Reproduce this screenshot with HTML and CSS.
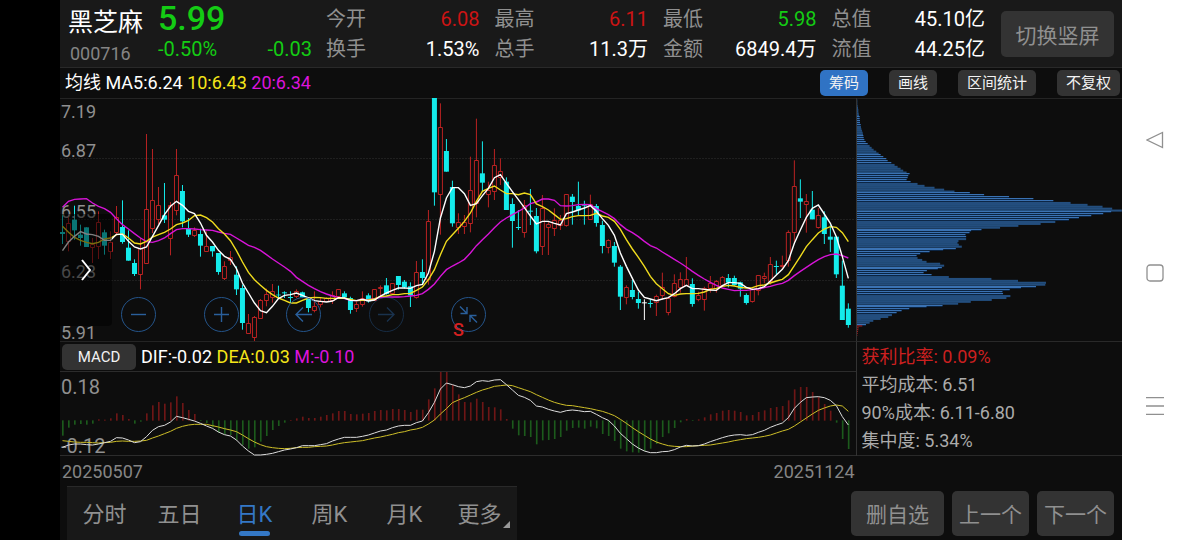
FILE: index.html
```html
<!DOCTYPE html>
<html lang="zh-CN">

<head>
	<meta charset="utf-8">
	<title>黑芝麻 000716</title>
	<link rel="stylesheet" href="styles.css">
</head>

<body>
	<main class="app">
		<header class="quote">
			<div class="stock">
				<h1>黑芝麻</h1>
				<span class="code">000716</span>
			</div>
			<div class="price">
				<strong>5.99</strong>
				<div class="change"><span>-0.50%</span><span>-0.03</span></div>
			</div>
			<dl class="fields">
				<div><dt>今开</dt><dd class="up">6.08</dd></div>
				<div><dt>最高</dt><dd class="up">6.11</dd></div>
				<div><dt>最低</dt><dd class="down">5.98</dd></div>
				<div><dt>总值</dt><dd>45.10亿</dd></div>
				<div><dt>换手</dt><dd>1.53%</dd></div>
				<div><dt>总手</dt><dd>11.3万</dd></div>
				<div><dt>金额</dt><dd>6849.4万</dd></div>
				<div><dt>流值</dt><dd>44.25亿</dd></div>
			</dl>
			<button class="btn rotate">切换竖屏</button>
		</header>

		<div class="toolbar">
			<p class="legend">均线 MA5:6.24 <span class="yellow">10:6.43</span> <span class="magenta">20:6.34</span></p>
			<button class="btn small active">筹码</button>
			<button class="btn small">画线</button>
			<button class="btn small">区间统计</button>
			<button class="btn small">不复权</button>
		</div>

		<div class="charts">
			<section class="left">
				<div class="kline">
					<svg id="kline" viewBox="0 0 2387 729" preserveAspectRatio="none"></svg>
					<div class="scale">
						<div><span>7.19</span><span>6.87</span></div>
						<div><span>6.55</span></div>
						<div><span>6.23</span></div>
						<div><span>5.91</span></div>
					</div>
					<button class="drawer" aria-label="展开">
						<svg width="10" height="22" viewBox="0 0 10 22"><path d="M1 1L9 11L1 21" /></svg>
					</button>
					<div class="controls">
						<button aria-label="缩小"><svg viewBox="0 0 35 35"><path d="M10 17.5H25" /></svg></button>
						<button aria-label="放大"><svg viewBox="0 0 35 35"><path d="M10 17.5H25M17.5 10V25" /></svg></button>
						<button aria-label="左移"><svg viewBox="0 0 35 35"><path d="M26 17.5H10M17 10.5L10 17.5L17 24.5" /></svg></button>
						<button aria-label="右移" disabled><svg viewBox="0 0 35 35"><path d="M9 17.5H25M18 10.5L25 17.5L18 24.5" /></svg></button>
						<button aria-label="收起"><svg viewBox="0 0 35 35"><path d="M9 9.5L16 16.5M9.5 16.5H16V10M26 25.5L19 18.5M25.5 18.5H19V25" /></svg></button>
					</div>
					<span class="mark">S</span>
				</div>
				<div class="indicator">
					<button class="btn small">MACD</button>
					<p class="legend">DIF:-0.02 <span class="yellow">DEA:0.03</span> <span class="magenta">M:-0.10</span></p>
				</div>
				<div class="macd">
					<svg id="macd" viewBox="0 0 2387 252" preserveAspectRatio="none"></svg>
					<span>0.18</span>
					<span>-0.12</span>
				</div>
				<div class="dates"><span>20250507</span><span>20251124</span></div>
			</section>
			<aside class="right">
				<svg id="chips" viewBox="0 0 798 729" preserveAspectRatio="none"></svg>
				<ul class="cost">
					<li class="profit">获利比率: 0.09%</li>
					<li>平均成本: 6.51</li>
					<li>90%成本: 6.11-6.80</li>
					<li>集中度: 5.34%</li>
				</ul>
			</aside>
		</div>

		<footer>
			<nav class="tabs">
				<a href="#">分时</a>
				<a href="#">五日</a>
				<a href="#" class="current">日K</a>
				<a href="#">周K</a>
				<a href="#">月K</a>
				<a href="#" class="more">更多</a>
			</nav>
			<div class="actions">
				<button class="btn">删自选</button>
				<button class="btn">上一个</button>
				<button class="btn">下一个</button>
			</div>
		</footer>
	</main>

	<div class="system">
		<svg width="18" height="18" viewBox="0 0 18 18"><path d="M16.5 1.5V16.5L1 9Z" /></svg>
		<svg width="18" height="18" viewBox="0 0 18 18"><rect x="1" y="1" width="16" height="16" rx="3" /></svg>
		<svg width="18" height="18" viewBox="0 0 18 18"><path d="M0 .5H18M0 9H18M0 17.5H18" /></svg>
	</div>

	<script src="chart.js"></script>
</body>

</html>
```
FILE: styles.css
```css
* {
	box-sizing: border-box;
}

body {
	display: flex;
	min-height: 100vh;
	margin: 0;
	padding-left: 60px;
	background: #000;
	color: #fff;
	font-family: Roboto, "Noto Sans CJK SC", sans-serif;
	font-size: 18px;
	line-height: 20px;
}

h1,
p,
dl,
dd,
ul {
	margin: 0;
	padding: 0;
}

button {
	border: none;
	padding: 0;
	background: none;
	font-family: inherit;
}

svg {
	display: block;
	fill: none;
}

.app {
	flex: 1;
	display: flex;
	flex-direction: column;
	min-width: 0;
	background: #0d0d0d;
}

.btn {
	border-radius: 5px;
	background: #333;
	color: #909090;
	font-size: 21px;
	white-space: nowrap;
}

.btn.small {
	height: 26px;
	padding: 0 9px;
	color: #f2f2f2;
	font-size: 15px;
	line-height: 24px;
}

.btn.small.active {
	background: #3073c4;
}

.up {
	color: #cc1414;
}

.down {
	color: #14cc14;
}

.yellow {
	color: #f5e619;
}

.magenta {
	color: #dc14dc;
}

/* quote header */
.quote {
	display: flex;
	height: 68px;
	padding: 0 8px;
	border-bottom: 1px solid #292929;
	background: #191919;
}

.stock {
	width: 90px;
	padding-top: 8px;
}

.stock h1 {
	font-size: 25px;
	font-weight: 400;
	line-height: 30px;
}

.code {
	display: block;
	padding: 6px 2px;
	color: #858585;
}

.price {
	width: 154px;
	color: #14cc14;
	font-size: 20px;
}

.price strong {
	display: block;
	font-size: 34px;
	font-weight: 500;
	line-height: 36px;
}

.change {
	display: flex;
	justify-content: space-between;
	line-height: 26px;
}

.fields {
	flex: 1;
	display: grid;
	grid-template-columns: repeat(4, 1fr);
	column-gap: 15px;
	align-content: start;
	padding: 4px 16px 0 14px;
	font-size: 20px;
	line-height: 30px;
}

.fields div {
	display: flex;
	justify-content: space-between;
}

.fields dt {
	color: #909090;
}

.rotate {
	align-self: center;
	width: 113px;
	height: 46px;
}

/* moving averages */
.toolbar {
	display: flex;
	align-items: center;
	gap: 21px;
	height: 30px;
	padding: 0 2px 0 5px;
}

.toolbar .legend {
	flex: 1;
}

/* charts */
.charts {
	display: grid;
	grid-template-columns: 3fr 1fr;
	flex: 1;
}

.left,
.right {
	min-width: 0;
}

.kline,
.macd {
	position: relative;
	border-right: 1px solid #333;
}

.kline svg#kline,
#chips {
	width: 100%;
	height: 243px;
	box-shadow: inset 0 1px #242424;
}

.scale {
	position: absolute;
	inset: 1px 0 -1px;
	display: grid;
	grid-template-rows: repeat(4, 1fr);
	padding-left: 1px;
	color: #909090;
	line-height: 18px;
}

.scale div {
	display: flex;
	flex-direction: column;
	justify-content: flex-end;
}

.scale div:first-child {
	justify-content: space-between;
	padding-top: 4px;
}

.drawer {
	position: absolute;
	left: 0;
	bottom: 15px;
	display: flex;
	align-items: center;
	justify-content: center;
	width: 52px;
	height: 112px;
	border-radius: 0 4px 4px 0;
	background: rgba(0, 0, 0, .5);
}

.drawer svg {
	stroke: #fff;
	stroke-width: 2;
}

.controls {
	position: absolute;
	left: 61px;
	bottom: 9px;
	display: flex;
	justify-content: space-between;
	width: 365px;
}

.controls button {
	width: 35px;
	height: 35px;
	border: 1px solid #24548a;
	border-radius: 50%;
}

.controls button:disabled {
	opacity: .45;
}

.controls svg {
	margin: -1px;
	stroke: #2a5f9b;
	stroke-width: 1.4;
}

.mark {
	position: absolute;
	left: 393px;
	bottom: 1px;
	color: #d42020;
	font-size: 18px;
	font-weight: 500;
}

.indicator {
	display: flex;
	align-items: center;
	gap: 5px;
	height: 30px;
	padding-left: 2px;
	border-top: 1px solid #242424;
	border-right: 1px solid #333;
}

.indicator .btn {
	width: 74px;
}

.macd {
	display: flex;
	flex-direction: column;
	justify-content: space-between;
	height: 85px;
	padding: 6px 0 0 1px;
	box-shadow: inset 0 1px #2c2c2c, inset 0 -1px #2c2c2c;
	color: #909090;
	font-size: 20px;
}

.macd svg {
	position: absolute;
	left: 0;
	bottom: 0;
	width: 100%;
	height: 84px;
}

.dates {
	display: flex;
	justify-content: space-between;
	padding: 6px 2px 4px;
	color: #858585;
}

.cost {
	display: flex;
	flex-direction: column;
	justify-content: space-around;
	height: 115px;
	padding: 1px 0 0 5px;
	border-top: 1px solid #292929;
	border-bottom: 1px solid #292929;
	color: #ababab;
	list-style: none;
}

.cost .profit {
	color: #cc2020;
}

/* chart shapes */
#kline path,
#macd path {
	vector-effect: non-scaling-stroke;
}

.grid {
	stroke: #1f1f1f;
	stroke-dasharray: 2 1;
}

.rise {
	stroke: #b92222;
}

.fall {
	fill: #14ebeb;
	stroke: none;
}

.flat {
	fill: #fff;
}

.ma5 {
	stroke: #fff;
	stroke-width: 1.4;
}

.ma10 {
	stroke: #f0dc1e;
	stroke-width: 1.4;
}

.ma20 {
	stroke: #d714d7;
	stroke-width: 1.4;
}

.dif {
	stroke: #ddd;
}

.dea {
	stroke: #cdbe28;
}

.bar-up {
	fill: #6e1616;
}

.bar-down {
	fill: #1c5a1c;
}

.chip {
	fill: #234e7e;
}

.chip-gap {
	fill: #0b2442;
}

.chip-line {
	fill: #3a72b3;
}

.chip-win {
	fill: #b52020;
}

/* period tabs */
footer {
	display: flex;
	justify-content: space-between;
	height: 54px;
	padding: 0 8px 0 7px;
}

.tabs {
	display: grid;
	grid-template-columns: repeat(6, 75px);
	border-top: 1px solid #292929;
	background: #181818;
}

.tabs a {
	position: relative;
	color: #909090;
	font-size: 22px;
	line-height: 56px;
	text-align: center;
	text-decoration: none;
}

.tabs .current {
	color: #3478c6;
}

.tabs .current::after {
	content: "";
	position: absolute;
	left: 22px;
	top: 44px;
	width: 31px;
	height: 5px;
	border-radius: 3px;
	background: #3478c6;
}

.more::after {
	content: "";
	position: absolute;
	right: 7px;
	top: 34px;
	border-left: 7px solid transparent;
	border-bottom: 7px solid #999;
}

.actions {
	display: flex;
	gap: 8px;
	padding: 5px 0 4px;
}

.actions .btn {
	padding: 0 7px 2px;
}

.actions .btn:first-child {
	padding: 0 15px 2px;
}

/* phone navigation strip */
.system {
	display: flex;
	flex-direction: column;
	align-items: center;
	justify-content: center;
	gap: 115px;
	width: 66px;
	padding-top: 5px;
	background: #fff;
}

.system svg {
	stroke: #909090;
	stroke-width: 1.3;
}
```
FILE: chart.js
```js
// high, body top, body bottom, low, direction (1 rise, 0 fall, 2 flat)
const candles = [
	[350,402,408,438,0],[350,375,430,460,1],[323,365,397,425,0],[380,410,420,443,0],[388,388,447,447,0],
	[420,438,448,495,1],[340,374,444,483,1],[395,403,443,470,0],[400,432,461,483,1],[324,357,403,408,1],
	[307,387,432,437,0],[397,449,488,488,0],[484,495,528,534,0],[420,452,529,574,1],[108,334,497,497,1],
	[153,307,391,405,1],[267,322,364,378,1],[255,352,365,375,0],[312,322,421,472,1],[153,232,338,352,1],
	[261,279,370,388,0],[360,393,410,417,0],[388,397,412,417,1],[392,408,443,476,0],[400,444,461,461,1],
	[444,444,460,476,0],[465,465,522,530,0],[490,505,542,546,1],[459,479,487,501,1],[505,530,574,591,0],
	[560,570,675,695,0],[648,676,705,707,1],[654,659,717,729,1],[603,607,661,661,1],[572,589,608,625,1],
	[558,580,598,614,1],[563,590,592,600,0],[580,583,586,600,0],[580,597,600,616,0],[574,580,596,600,1],
	[581,583,598,600,0],[598,602,630,643,0],[580,626,638,643,1],[600,611,620,628,1],[598,602,610,612,1],
	[580,592,606,618,1],[574,574,594,600,1],[580,586,598,600,0],[596,600,636,647,0],[612,618,632,642,1],
	[580,601,618,626,1],[586,592,610,614,0],[574,574,606,606,1],[562,569,572,594,1],[540,562,588,590,0],
	[556,557,586,590,1],[534,534,561,575,0],[546,551,568,572,0],[553,565,592,627,0],[489,523,598,602,1],
	[484,522,540,560,0],[336,369,545,560,1],[0,0,283,323,0],[16,89,290,410,1],[123,159,221,221,0],
	[248,267,376,386,0],[346,373,388,408,1],[351,372,384,408,1],[176,277,377,403,1],[62,187,316,358,1],
	[130,226,254,279,0],[251,278,290,328,1],[153,203,279,306,1],[181,221,238,261,1],[238,251,336,336,0],
	[301,318,369,449,0],[336,387,390,396,0],[306,321,404,419,1],[273,338,341,381,0],[330,354,460,466,0],
	[291,330,445,471,1],[369,380,388,471,1],[331,366,391,414,1],[351,368,381,396,1],[289,290,382,386,1],
	[288,296,312,380,0],[251,324,337,353,0],[308,322,324,380,0],[290,319,364,366,1],[318,324,375,386,0],
	[368,381,444,466,0],[424,426,449,466,1],[432,444,494,506,0],[501,506,596,636,0],[562,568,598,619,1],
	[546,576,597,604,0],[581,603,615,632,0],[604,613,616,666,2],[604,615,618,629,0],[590,595,613,654,1],
	[524,569,593,606,1],[596,600,644,652,1],[529,556,594,598,1],[523,544,569,584,1],[477,544,562,564,1],
	[541,558,618,626,0],[581,592,605,610,1],[566,570,605,638,1],[534,556,571,584,1],[546,551,571,584,1],
	[534,538,561,566,1],[528,540,554,568,0],[533,540,561,563,0],[551,553,572,596,0],[586,591,615,620,0],
	[568,574,610,614,1],[531,532,576,592,1],[524,534,541,556,1],[477,500,551,560,1],[488,504,507,529,0],
	[473,502,505,514,1],[397,403,488,506,1],[187,266,403,436,1],[244,301,311,360,0],[288,310,318,404,1],
	[279,335,364,364,0],[330,352,388,392,1],[340,358,408,438,0],[380,416,425,462,0],[416,416,529,540,0],
	[488,563,666,666,0],[616,632,681,689,0]
];

const ma5 = [458,432,415,401,408,410,415,427,427,409,409,430,447,453,447,415,383,350,325,310,322,340,347,375,412,432,457,475,484,512,555,585,615,638,644,625,602,592,590,585,592,600,608,610,612,609,599,600,607,608,604,609,606,594,585,577,570,570,571,563,559,525,460,360,300,269,269,287,322,317,293,271,239,230,256,281,305,329,354,378,370,370,376,381,347,342,336,330,323,340,362,382,412,465,505,541,576,598,603,608,603,599,587,572,562,572,572,574,576,577,563,554,554,556,568,574,572,566,549,531,514,488,436,396,358,331,321,348,376,416,476,541];
const ma10 = [385,403,418,427,433,437,433,423,420,410,408,420,435,438,430,417,410,403,393,380,375,367,353,351,359,372,392,408,428,458,492,523,545,562,577,590,600,607,615,615,607,600,598,599,601,601,601,600,604,608,607,606,603,595,594,590,590,587,586,577,567,545,515,470,430,410,391,370,345,310,280,271,264,276,287,287,290,285,290,318,326,336,350,364,362,356,353,353,352,346,354,358,370,394,425,453,478,505,535,557,572,587,592,588,587,587,586,582,574,571,565,562,564,568,570,569,563,561,555,549,544,530,503,475,446,425,405,393,386,388,404,431];
const ma20 = [328,310,304,303,302,315,325,332,343,362,380,393,407,420,431,433,428,420,407,395,392,392,393,395,396,397,402,406,409,420,431,442,448,457,470,483,495,507,520,538,550,562,572,581,588,594,598,602,607,608,606,605,602,599,597,597,597,596,594,592,587,574,558,535,515,504,495,484,465,443,425,408,389,372,360,350,340,330,317,312,303,303,307,323,324,323,320,319,320,332,341,350,362,380,394,404,416,430,443,450,462,473,484,495,507,520,532,543,553,562,570,574,578,577,577,575,573,569,565,560,556,547,533,520,508,496,485,476,470,468,473,480];

const macdBars = [287,263,254,252,254,251,238,239,235,220,225,237,251,245,220,196,186,191,187,169,189,210,222,243,249,262,278,283,285,300,315,326,322,305,288,270,258,248,240,235,230,234,234,230,225,220,213,213,222,223,221,219,213,210,211,207,207,210,216,209,209,178,145,95,95,135,163,186,187,176,186,201,202,208,237,266,286,288,291,313,301,300,297,291,272,264,263,266,260,265,282,288,303,326,334,337,338,333,326,312,291,280,264,247,237,243,238,232,223,219,212,210,212,216,226,225,216,211,204,201,198,181,148,141,141,156,171,192,212,248,297,327];
const dif = [322,315,312,312,314,315,312,308,304,293,294,300,308,305,290,271,260,256,246,229,233,238,243,250,258,265,276,284,288,300,318,333,345,345,343,340,335,330,327,323,317,317,317,314,311,303,297,292,292,292,289,285,279,273,270,263,258,256,256,248,243,218,187,147,129,134,140,143,138,125,122,124,120,119,134,150,166,172,181,198,201,208,213,217,212,210,212,215,214,223,233,241,258,280,296,312,324,333,338,338,335,334,329,321,316,318,317,312,305,299,293,288,285,284,286,284,277,271,262,255,249,233,205,187,173,171,170,173,181,197,230,255];
const dea = [302,304,306,307,307,308,309,308,307,304,303,304,304,303,301,294,288,281,274,265,259,255,253,253,253,257,261,266,270,275,285,296,306,314,320,323,325,326,325,323,322,322,320,319,318,315,311,308,306,304,302,298,294,291,287,283,278,275,270,267,262,252,240,222,206,188,180,173,165,157,150,145,139,137,135,137,143,149,155,164,172,180,187,192,196,197,200,203,206,210,214,220,227,238,250,263,275,286,297,306,312,317,319,320,320,318,317,316,315,312,309,306,302,299,296,294,292,289,285,279,273,268,258,246,234,222,211,204,198,195,198,214];

// holdings per price level, top to bottom
const chips = [
	1,1,1,2,3,4,4,5,6,
	8,8,9,9,11,12,13,15,17,18,
	19,20,22,26,32,38,44,50,58,65,
	71,79,88,92,103,113,122,131,139,149,
	158,154,152,149,161,182,203,233,262,293,
	339,382,457,530,590,642,693,738,767,796,
	764,740,704,667,637,596,552,485,430,
	374,343,338,326,328,328,305,302,306,315,
	297,259,218,190,179,182,196,209,250,262,
	255,243,210,200,224,276,404,484,568,566,
	538,493,459,437,439,461,449,405,342,304,
	257,209,157,134,119,105,94,71,49,38,
	27,16,5,4,3,2,1
];
const winFrom = 119;

const x = i => 7.5 + i * 18;
const rect = (cls, left, top, w, h) => `<rect class="${cls}" x="${left}" y="${top}" width="${w}" height="${h}"/>`;
const line = (cls, values, shift) => `<path class="${cls}" d="M${values.map((v, i) => x(i) + ' ' + (v - shift)).join('L')}"/>`;
// puts a horizontal stroke in the middle of a pixel row
const snap = y => Math.floor(y / 3) * 3 + 1.5;

let out = '';
for (const y of [182, 365, 547]) {
	out += `<path class="grid" d="M0 ${snap(y)}H2387"/>`;
}
candles.forEach(([high, top, bottom, low, dir], i) => {
	if (dir === 1) {
		const t = snap(top);
		const b = Math.max(snap(bottom), t + 3);
		out += `<path class="rise" d="M${x(i)} ${high}V${t}M${x(i)} ${b}V${low}M${x(i) - 6} ${t}h12V${b}h-12z"/>`;
	} else {
		const cls = dir === 2 ? 'flat' : 'fall';
		out += rect(cls, x(i) - 1.5, high, 3, low - high) + rect(cls, x(i) - 7.5, top, 15, bottom - top);
	}
});
out += line('ma20', ma20, 0) + line('ma10', ma10, 0) + line('ma5', ma5, 0);
document.getElementById('kline').innerHTML = out;

// the zero axis is at 241, the panel starts at 96
out = '';
macdBars.forEach((v, i) => {
	out += v < 241 ? rect('bar-up', x(i) - 1.5, v - 96, 5, 242 - v) : rect('bar-down', x(i) - 1.5, 145, 5, v - 241);
});
out += line('dea', dea, 96) + line('dif', dif, 96);
document.getElementById('macd').innerHTML = out;

out = '';
chips.forEach((w, i) => {
	const y = 4 + i * 5.7;
	const n = i < 68 ? i - 9 : i - 8;
	if (i >= winFrom) {
		out += rect('chip-win', 0, y, w, 3);
	} else if (n >= 0 && n % 10 < 5) {
		const top = Math.round(y / 3) * 3;
		out += rect('chip-gap', 0, top, w, 6) + rect('chip-line', 0, top, w, 3);
	} else {
		out += rect('chip', 0, y, w, 6.3);
	}
});
document.getElementById('chips').innerHTML = out;
```
